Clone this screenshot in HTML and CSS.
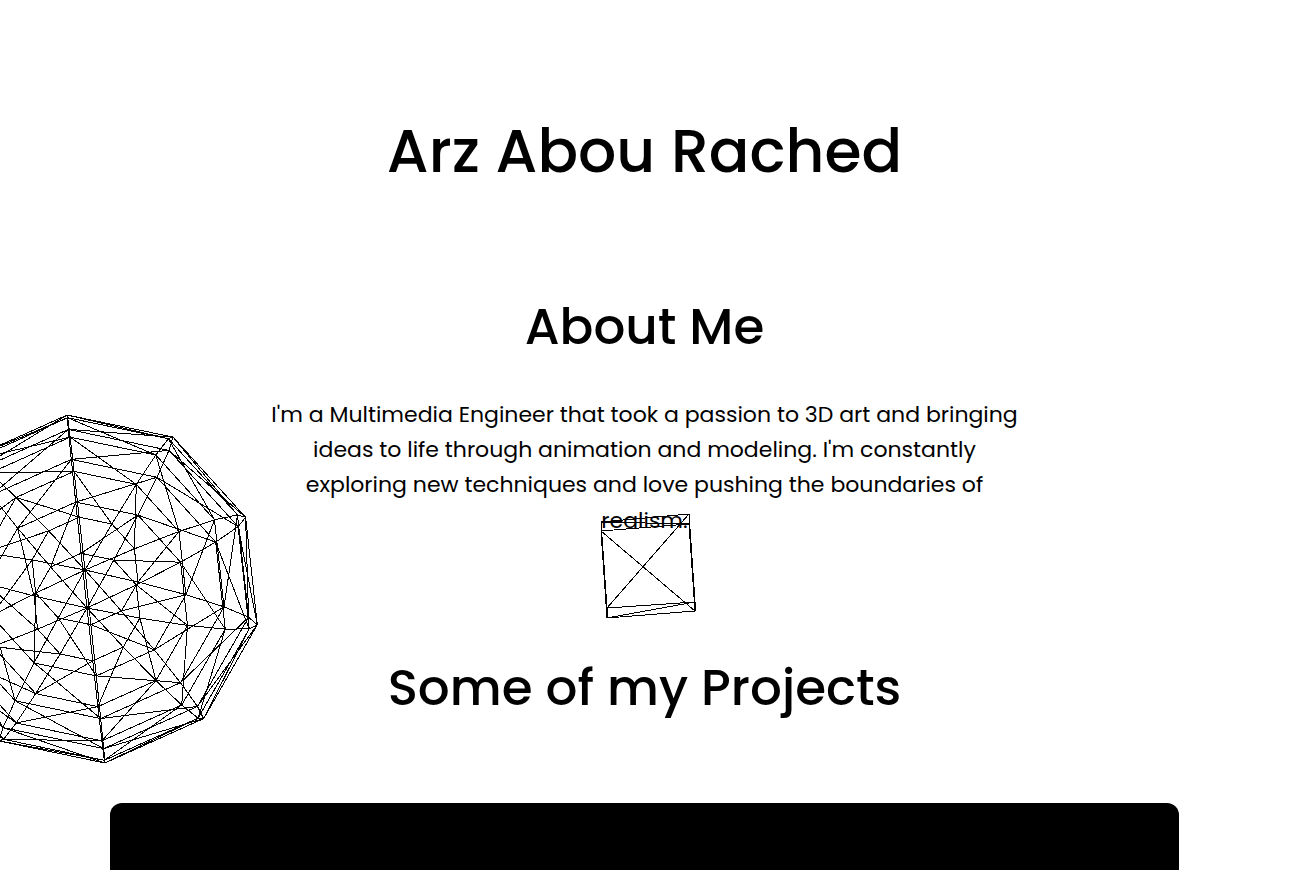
FILE: index.html
```html
<!DOCTYPE html>
<html lang="en">
<head>
<meta charset="utf-8">
<meta name="viewport" content="width=device-width, initial-scale=1">
<title>Arz Abou Rached</title>
<link rel="stylesheet" href="styles.css">
</head>
<body>
<header class="hero">
  <h1 class="name">Arz Abou Rached</h1>
</header>
<main class="content">
  <section class="about">
    <svg class="wire sphere" width="352" height="352" viewBox="-176 -176 352 352" aria-hidden="true"><path id="sphere"/></svg>
    <h2 class="heading">About Me</h2>
    <p class="intro">I'm a Multimedia Engineer that took a passion to 3D art and bringing ideas to life through animation and modeling. I'm constantly exploring new techniques and love pushing the boundaries of realism.</p>
    <svg class="wire cube" width="96" height="106" viewBox="600 513 96 106" aria-hidden="true">
      <path d="M601 531L689 524L695 611L607 618ZM601 522L689 514L695 602L607 608ZM601 522V531M689 514V524M695 602V611M607 608V618M601 531L695 611M689 514L607 608M607 618L695 602M601 522L689 524M601 531L607 608M689 514L695 611"/>
    </svg>
  </section>
  <section class="projects">
    <h2 class="heading">Some of my Projects</h2>
    <div class="project-card"></div>
  </section>
</main>
<script src="script.js"></script>
</body>
</html>
```
FILE: styles.css
```css
* { box-sizing: border-box; }

body {
  display: flex;
  flex-direction: column;
  min-height: 100vh;
  margin: 0;
  padding-right: 9px;
  background: #fff;
  color: #000;
  font-family: Poppins, Inter, sans-serif;
  text-align: center;
}

.hero { padding: 103px 20px 77px; }

.name {
  margin: 0;
  font-size: 60px;
  font-weight: 500;
  line-height: 96px;
}

.content,
.projects {
  display: flex;
  flex: 1;
  flex-direction: column;
}

.about {
  position: relative;
  padding: 13px 20px 0;
}

.heading {
  margin: 0;
  font-size: 50px;
  font-weight: 500;
  line-height: 76px;
}

.intro {
  max-width: 760px;
  margin: 32px auto 0;
  font-size: 22px;
  line-height: 1.6;
}

.wire {
  position: absolute;
  fill: none;
  stroke: #000;
  stroke-width: 1px;
  shape-rendering: crispEdges;
  pointer-events: none;
}

.sphere { left: -90px; top: 137px; }

.cube {
  left: 50%;
  top: 237px;
  margin-left: -45px;
}

.projects { padding-top: 112px; }

.project-card {
  flex: 1;
  width: 83%;
  min-height: 60px;
  margin: 77px auto 0;
  border-radius: 12px 12px 0 0;
  background: #000;
}
```
FILE: script.js
```js
// Wireframe sphere: 10 segments by 10 rings, seen almost along its axis.
const SEGMENTS = 10;
const RADIUS = 175;
const TILT = { x: -1, y: -19 };
const TURN = -6.2 * Math.PI / 180;

function point(ring, segment) {
  const theta = ring * Math.PI / SEGMENTS;
  const phi = TURN + segment * 2 * Math.PI / SEGMENTS;
  const r = RADIUS * Math.sin(theta);
  const x = r * Math.sin(phi) + TILT.x * Math.cos(theta);
  const y = -r * Math.cos(phi) + TILT.y * Math.cos(theta);
  return x.toFixed(1) + " " + y.toFixed(1);
}

let path = "";
for (let i = 0; i < SEGMENTS; i++) {
  for (let j = 0; j < SEGMENTS; j++) {
    path += "M" + point(i, j) + "L" + point(i + 1, j);
    if (i > 0) path += "M" + point(i, j) + "L" + point(i, j + 1);
    if (i > 0 && i < SEGMENTS - 1) path += "M" + point(i, j) + "L" + point(i + 1, j - 1);
  }
}
document.getElementById("sphere").setAttribute("d", path);
```
